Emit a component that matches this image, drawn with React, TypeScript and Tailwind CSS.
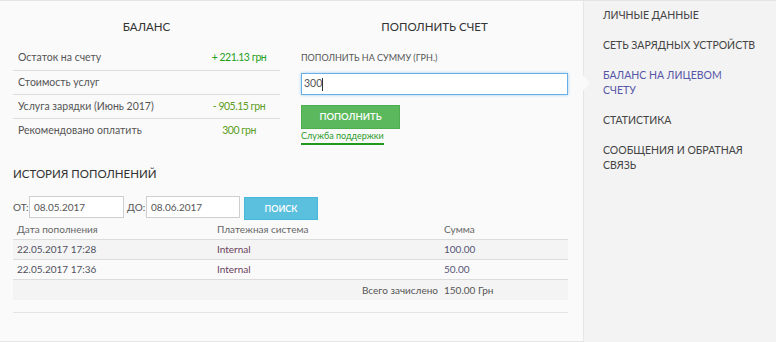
import React from "react";

const balanceRows = [
  { label: "Остаток на счету", value: "+ 221.13 грн", color: "text-[#1fa01f]" },
  { label: "Стоимость услуг", value: "", color: "" },
  { label: "Услуга зарядки (Июнь 2017)", value: "- 905.15 грн", color: "text-[#5a9e22]" },
  { label: "Рекомендовано оплатить", value: "300 грн", color: "text-[#5a9e22]" },
];

const history = [
  { date: "22.05.2017 17:28", sys: "Internal", sum: "100.00" },
  { date: "22.05.2017 17:36", sys: "Internal", sum: "50.00" },
];

const menu = [
  { t: "ЛИЧНЫЕ ДАННЫЕ", active: false },
  { t: "СЕТЬ ЗАРЯДНЫХ УСТРОЙСТВ", active: false },
  { t: "БАЛАНС НА ЛИЦЕВОМ СЧЕТУ", active: true },
  { t: "СТАТИСТИКА", active: false },
  { t: "СООБЩЕНИЯ И ОБРАТНАЯ СВЯЗЬ", active: false },
];

export default function App() {
  return (
    <div className="w-[776px] h-[342px] flex bg-[#f3f3f3] border-t border-[#e4e4e4] font-['Lato','Open_Sans',sans-serif] text-[#444] overflow-hidden">
      <div className="relative w-[584px] h-[341px] shrink-0 bg-[#fafafa] border-r border-b border-[#e6e6e6] pl-[13px] pr-[15px]">
        <div className="flex gap-[21px]">
          {/* Balance */}
          <div className="w-[267px] pt-[18px]">
            <div className="h-[16px] leading-[16px] text-center text-[11.5px] text-[#333]">БАЛАНС</div>
            <div className="mt-[11px]">
              {balanceRows.map((r, i) => (
                <div
                  key={i}
                  className={`flex h-[24px] items-center text-[10.5px] ${i > 0 ? "border-t border-[#dedede]" : ""}`}
                >
                  <div className="w-[185px] pl-[5px] text-[#555]">{r.label}</div>
                  <div className={`flex-1 text-center tracking-[-0.5px] ${r.color}`}>{r.value}</div>
                </div>
              ))}
            </div>
          </div>
          {/* Top up */}
          <div className="w-[267px] pt-[18px]">
            <div className="h-[16px] leading-[16px] text-center text-[11.5px] text-[#333]">ПОПОЛНИТЬ СЧЕТ</div>
            <div className="mt-[17px] text-[9px] leading-[12px] text-[#555]">ПОПОЛНИТЬ НА СУММУ (ГРН.)</div>
            <div className="mt-[9px] h-[22px] border border-[#66afe9] bg-white shadow-[0_0_3px_rgba(102,175,233,0.6)] flex items-center pl-[2px] text-[10.5px] text-[#555]">
              300<span className="inline-block w-[1px] h-[13px] bg-[#333]" />
            </div>
            <div className="mt-[10px] w-[99px] h-[24px] bg-[#5cb85c] border border-[#4cae4c] flex items-center justify-center text-white text-[9.5px] font-semibold">
              ПОПОЛНИТЬ
            </div>
            <div className="mt-[1px] w-fit text-[9px] leading-[12px] text-[#2a9a2a] border-b-2 border-[#1f9a1f] pb-[1px]">
              Служба поддержки
            </div>
          </div>
        </div>

        {/* History */}
        <div className="mt-[21px] text-[11.5px] leading-[16px] text-[#333]">ИСТОРИЯ ПОПОЛНЕНИЙ</div>
        <div className="mt-[14px] flex items-start text-[10px] text-[#555]">
          <span className="w-[16px] h-[22px] flex items-center">ОТ:</span>
          <div className="w-[95px] h-[22px] border border-[#cfcfcf] bg-white flex items-center pl-[4px]">08.05.2017</div>
          <span className="ml-[3px] w-[19px] h-[22px] flex items-center">ДО:</span>
          <div className="w-[94px] h-[22px] border border-[#cfcfcf] bg-white flex items-center pl-[4px]">08.06.2017</div>
          <div className="ml-[4px] mt-[1px] w-[74px] h-[23px] bg-[#5bc0de] border border-[#46b8da] flex items-center justify-center text-white font-semibold text-[9px]">
            ПОИСК
          </div>
        </div>
        <div className="text-[10px] text-[#555]">
          <div className="flex h-[20px] items-center border-b border-[#dcdcdc] text-[#666]">
            <div className="w-[204px] pl-[4px]">Дата пополнения</div>
            <div className="w-[223px]">Платежная система</div>
            <div className="flex-1 pl-[4px]">Сумма</div>
          </div>
          {history.map((h, i) => (
            <div
              key={i}
              className={`flex h-[20px] items-center border-b border-[#dcdcdc] ${i === 0 ? "bg-[#f4f4f4]" : ""}`}
            >
              <div className="w-[204px] pl-[4px] text-[#505060]">{h.date}</div>
              <div className="w-[223px] text-[#6a4060]">{h.sys}</div>
              <div className="flex-1 pl-[4px] text-[#555577]">{h.sum}</div>
            </div>
          ))}
          <div className="flex h-[20px] items-center bg-[#f4f4f4]">
            <div className="w-[427px] text-right pr-[2px]">Всего зачислено</div>
            <div className="flex-1 pl-[4px]">150.00 Грн</div>
          </div>
          <div className="h-[13px] border-b border-[#e4e4e4]" />
        </div>

        {/* arrow */}
        <div className="absolute left-[583px] top-[74px] w-0 h-0 border-y-[8px] border-y-transparent border-l-[7px] border-l-[#fafafa]" />
      </div>

      {/* Sidebar */}
      <div className="w-[180px] pl-[19px] pt-[7px] flex flex-col gap-[15px] text-[10.5px] leading-[15px]">
        {menu.map((m, i) => (
          <div key={i} className={m.active ? "max-w-[140px] text-[#5656a8]" : "max-w-[162px] text-[#444]"}>
            {m.t}
          </div>
        ))}
      </div>
    </div>
  );
}
